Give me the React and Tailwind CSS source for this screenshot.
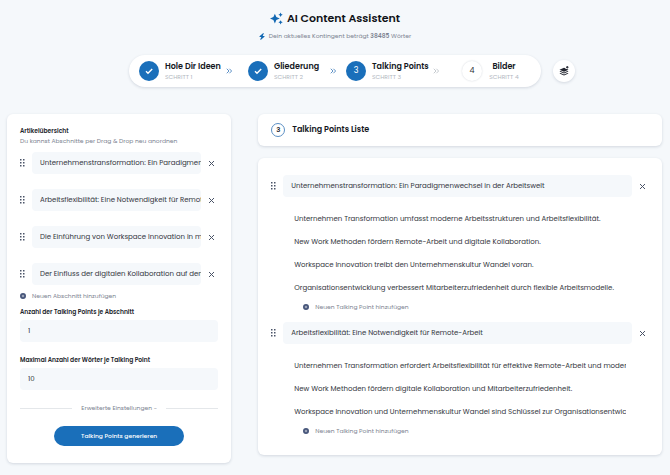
import { FaBolt, FaCirclePlus } from 'react-icons/fa6'

const sections = [
  'Unternehmenstransformation: Ein Paradigmenwechsel in der Arbeitswelt',
  'Arbeitsflexibilität: Eine Notwendigkeit für Remote-Arbeit',
  'Die Einführung von Workspace Innovation in modernen Unternehmen',
  'Der Einfluss der digitalen Kollaboration auf den Unternehmenserfolg',
]

const lists = [
  {
    title: sections[0],
    points: [
      'Unternehmen Transformation umfasst moderne Arbeitsstrukturen und Arbeitsflexibilität.',
      'New Work Methoden fördern Remote-Arbeit und digitale Kollaboration.',
      'Workspace Innovation treibt den Unternehmenskultur Wandel voran.',
      'Organisationsentwicklung verbessert Mitarbeiterzufriedenheit durch flexible Arbeitsmodelle.',
    ],
  },
  {
    title: sections[1],
    points: [
      'Unternehmen Transformation erfordert Arbeitsflexibilität für effektive Remote-Arbeit und moderne',
      'New Work Methoden fördern digitale Kollaboration und Mitarbeiterzufriedenheit.',
      'Workspace Innovation und Unternehmenskultur Wandel sind Schlüssel zur Organisationsentwicklung.',
    ],
  },
]

const card = 'rounded-md bg-white shadow-[0_1px_3px_rgba(30,50,80,0.16)]'
const field = 'h-[22px] min-w-0 rounded bg-[#f5f8fb] pl-2 text-[7px] text-[#33363d] outline-none'

function Sparkles() {
  return (
    <svg viewBox="0 0 24 24" className="h-[13px] w-[13px] fill-[#1268b3]" aria-hidden="true">
      <path d="M9 3l2.700 6.300L18 12l-6.300 2.700L9 21l-2.700-6.300L0 12l6.300-2.700z" />
      <path d="M19.500 1l1.300 2.700L23.500 5l-2.700 1.300L19.500 9l-1.300-2.700L15.500 5l2.700-1.300z" />
      <path d="M19.500 15l1.300 2.700 2.700 1.300-2.700 1.300-1.300 2.700-1.300-2.700-2.700-1.300 2.700-1.300z" />
    </svg>
  )
}

function Check() {
  return (
    <svg viewBox="0 0 10 10" className="h-2.5 w-2.5 fill-none stroke-white stroke-[1.4]" aria-hidden="true">
      <path d="M2 5.200l2 2L8.200 3" />
    </svg>
  )
}

function Chevrons({ muted }) {
  return (
    <svg viewBox="0 0 8 8" className={`h-[6px] w-[6px] fill-none stroke-[1.3] ${muted ? 'stroke-[#c3c8ce]' : 'stroke-[#5b8fc4]'}`} aria-hidden="true">
      <path d="M1 1l3 3-3 3M4.500 1l3 3-3 3" />
    </svg>
  )
}

function Grip() {
  return (
    <svg viewBox="0 0 6 10" className="h-[10px] w-[6px] shrink-0 fill-[#4b5468]" aria-hidden="true">
      {[1, 4, 7].map((y) => (
        <g key={y}>
          <rect x="0" y={y} width="1.500" height="1.500" />
          <rect x="3" y={y} width="1.500" height="1.500" />
        </g>
      ))}
    </svg>
  )
}

function RemoveButton() {
  return (
    <button type="button" aria-label="Entfernen" className="shrink-0">
      <svg viewBox="0 0 7 7" className="block h-[7px] w-[7px] fill-none stroke-[#4b5468]">
        <path d="M1 1l5 5M6 1L1 6" />
      </svg>
    </button>
  )
}

function AddButton({ children }) {
  return (
    <button type="button" className="flex items-center gap-[6px] text-[6px] leading-3 text-[#7c8391]">
      <FaCirclePlus className="h-[6px] w-[6px] text-[#46557a]" />
      {children}
    </button>
  )
}

function Step({ number, title, state, width, textWidth, centered, arrow }) {
  return (
    <li className={`flex items-center ${width}`}>
      <span
        className={`flex h-5 w-5 shrink-0 items-center justify-center rounded-full text-[8px] ${
          state === 'open' ? 'bg-white text-[#33363d] shadow-[0_0_2px_rgba(30,50,80,0.2)]' : 'bg-[#1a6fba] text-white'
        }`}
      >
        {state === 'done' ? <Check /> : number}
      </span>
      <div className={`ml-[6px] whitespace-nowrap ${textWidth} ${centered ? 'text-center' : ''}`}>
        <p className="text-[8px] leading-[11px] font-semibold text-[#14171d]">{title}</p>
        <p className="text-[6px] leading-[10px] text-[#b3b8bf]">SCHRITT {number}</p>
      </div>
      {arrow && <Chevrons muted={arrow === 'muted'} />}
    </li>
  )
}

function Sidebar() {
  return (
    <aside className={`${card} flex flex-col px-[13px] pt-3 pb-[17px]`}>
      <h2 className="text-[6px] leading-[10px] font-semibold text-[#22252b]">Artikelübersicht</h2>
      <p className="text-[6px] leading-[10px] text-[#7c8391]">Du kannst Abschnitte per Drag &amp; Drop neu anordnen</p>
      <ul className="mt-[6px] flex flex-col gap-[15px]">
        {sections.map((text) => (
          <li key={text} className="flex items-center pr-[3px]">
            <Grip />
            <input aria-label="Abschnitt" className={`${field} mr-[7px] ml-[6px] flex-1`} defaultValue={text} />
            <RemoveButton />
          </li>
        ))}
      </ul>
      <div className="mt-[5px]">
        <AddButton>Neuen Abschnitt hinzufügen</AddButton>
      </div>
      <label htmlFor="count" className="mt-1 text-[6px] leading-3 font-semibold text-[#22252b]">
        Anzahl der Talking Points je Abschnitt
      </label>
      <input id="count" className={`${field} mt-[2px]`} defaultValue="1" />
      <label htmlFor="words" className="mt-3 text-[6px] leading-3 font-semibold text-[#22252b]">
        Maximal Anzahl der Wörter je Talking Point
      </label>
      <input id="words" className={`${field} mt-[2px]`} defaultValue="10" />
      <div className="mt-3 flex items-center gap-[9px]">
        <span className="h-px flex-1 bg-[#e4e7ea]" />
        <button type="button" className="text-[6px] leading-3 text-[#7c8391]">Erweiterte Einstellungen -</button>
        <span className="h-px flex-1 bg-[#e4e7ea]" />
      </div>
      <button type="button" className="mx-auto mt-3 h-5 w-[130px] rounded-full bg-[#1a6fba] text-[6px] font-medium text-white">
        Talking Points generieren
      </button>
    </aside>
  )
}

function PointList({ title, points }) {
  return (
    <section>
      <div className="flex items-center">
        <Grip />
        <input aria-label="Abschnitt" className={`${field} mr-[7px] ml-[6px] flex-1`} defaultValue={title} />
        <RemoveButton />
      </div>
      <div className="mt-[10px] mr-[20px] ml-[23px] flex flex-col">
        {points.map((point) => (
          <input
            key={point}
            aria-label="Talking Point"
            className="h-[23px] min-w-0 bg-white text-[7px] text-[#33363d] outline-none"
            defaultValue={point}
          />
        ))}
      </div>
      <div className="mt-[2px] ml-8">
        <AddButton>Neuen Talking Point hinzufügen</AddButton>
      </div>
    </section>
  )
}

export default function App() {
  return (
    <div className="min-h-screen bg-[#f5f8fb] font-['Poppins','Inter',sans-serif]">
      <header className="flex flex-col items-center pt-[9px]">
        <h1 className="flex items-center gap-1 text-[11px] leading-[18px] font-semibold text-[#101318]">
          <Sparkles />
          AI Content Assistent
        </h1>
        <p className="mt-[3px] flex items-center gap-1 text-[6px] leading-3 text-[#7c8391]">
          <FaBolt className="h-[7px] w-[6px] text-[#1268b3]" />
          <span>
            Dein aktuelles Kontingent beträgt <b className="font-semibold">38485</b> Wörter
          </span>
        </p>
      </header>

      <nav className="mt-[13px] grid grid-cols-[1fr_auto_1fr] items-center gap-3">
        <ol className="col-start-2 flex h-8 items-center rounded-full bg-white pr-[21px] pl-[10px] shadow-[0_1px_3px_rgba(30,50,80,0.16)]">
          <Step number="1" title="Hole Dir Ideen" state="done" width="w-[109px]" textWidth="w-[61px]" arrow="blue" />
          <Step number="2" title="Gliederung" state="done" width="w-[98px]" textWidth="w-[56px]" arrow="blue" />
          <Step number="3" title="Talking Points" state="active" width="w-[116px]" textWidth="w-[61px]" arrow="muted" />
          <Step number="4" title="Bilder" state="open" width="w-[58px]" textWidth="w-[32px]" centered />
        </ol>
        <button
          type="button"
          aria-label="Vorlagen"
          className="flex h-[22px] w-[22px] items-center justify-center rounded-full bg-white shadow-[0_1px_3px_rgba(30,50,80,0.16)]"
        >
          <svg viewBox="0 0 20 20" className="h-[10px] w-[10px] fill-[#22252f]">
            <path d="M10 3.500L1 7.500l9 4 9-4-3-1.300h-3V4.500z" />
            <path d="M15.500 0h2v1.500H19v2h-1.500V5h-2V3.500H14v-2h1.500z" />
            <path d="M1 11l2-1 7 3 7-3 2 1-9 4z" />
            <path d="M1 15l2-1 7 3 7-3 2 1-9 4z" />
          </svg>
        </button>
      </nav>

      <main className="mt-[27px] grid grid-cols-[5fr_9fr] items-start gap-[27px] pr-2 pb-3 pl-[7px]">
        <Sidebar />
        <div className="flex min-w-0 flex-col gap-3">
          <div className={`${card} flex h-8 items-center gap-[7px] px-[13px]`}>
            <span className="flex h-[14px] w-[14px] items-center justify-center rounded-full border border-[#5b8fc4] text-[7px] font-semibold text-[#22252b]">
              3
            </span>
            <h2 className="text-[8px] font-semibold text-[#14171d]">Talking Points Liste</h2>
          </div>
          <div className={`${card} flex flex-col gap-[9px] pt-[17px] pr-4 pb-[18px] pl-[13px]`}>
            {lists.map((list) => (
              <PointList key={list.title} title={list.title} points={list.points} />
            ))}
          </div>
        </div>
      </main>
    </div>
  )
}
